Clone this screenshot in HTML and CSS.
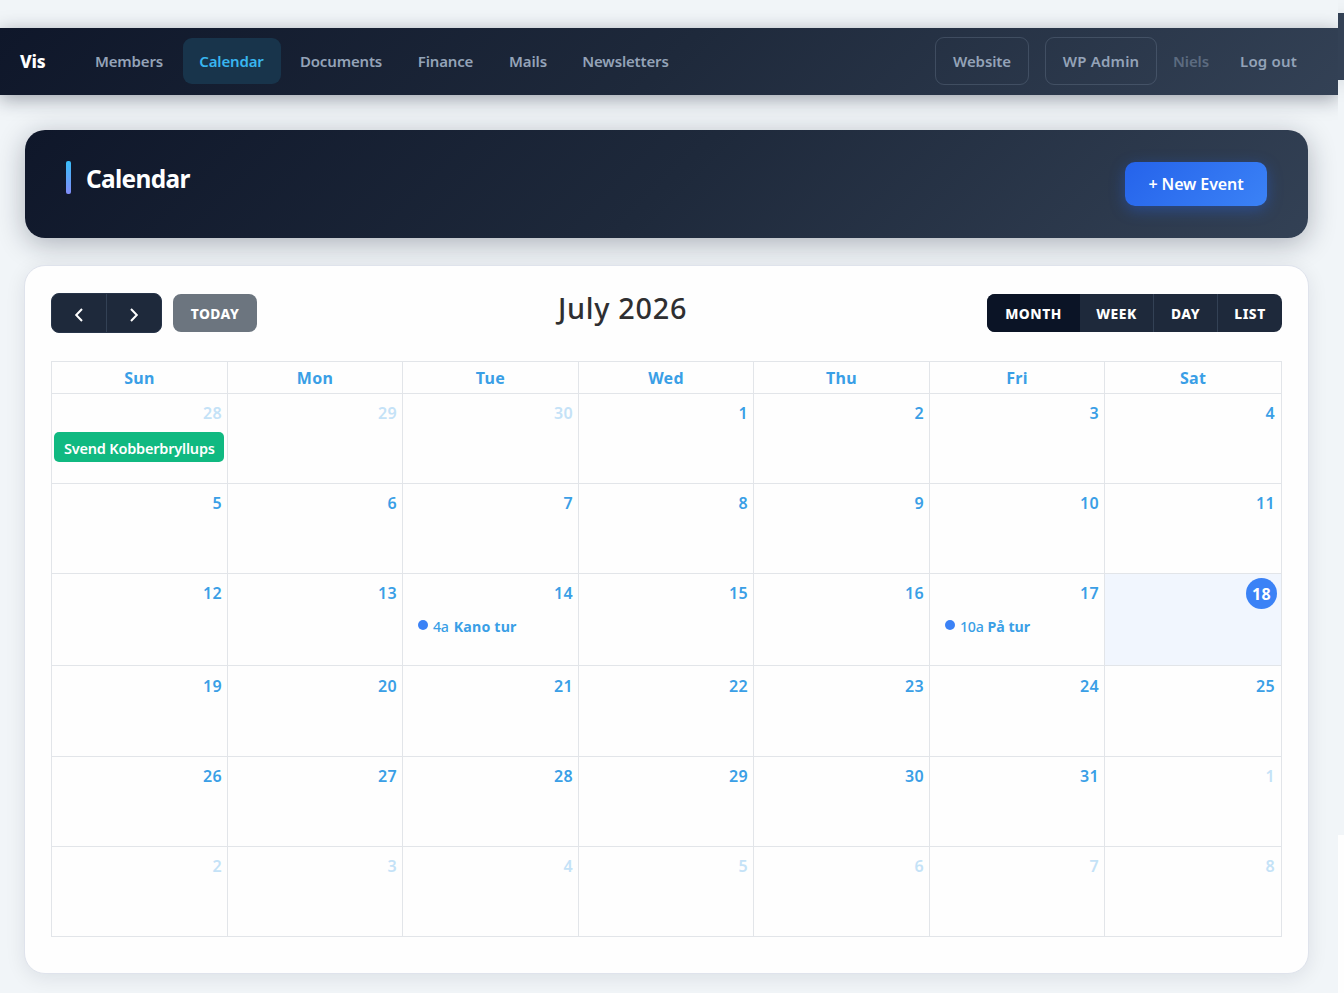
FILE: index.html
```
<!DOCTYPE html>
<html lang="en">
<head>
<meta charset="utf-8">
<title>Calendar</title>
<link rel="stylesheet" href="styles.css">
</head>
<body>
<div class="page">
  <header class="navbar">
    <a class="brand">Vis</a>
    <nav class="nav-links">
      <a class="nav-link">Members</a><a class="nav-link active">Calendar</a><a class="nav-link">Documents</a><a class="nav-link">Finance</a><a class="nav-link">Mails</a><a class="nav-link">Newsletters</a>
    </nav>
    <div class="nav-user">
      <a class="outlined">Website</a><a class="outlined wide">WP Admin</a><span class="user">Niels</span><a class="logout">Log out</a>
    </div>
  </header>
  <section class="hero">
    <div class="hero-title"><span class="accent"></span><h1>Calendar</h1></div>
    <button class="new-event">+ New Event</button>
  </section>
  <main class="card">
    <div class="toolbar">
      <div class="left">
        <div class="arrows">
          <button><svg width="10" height="14" viewBox="0 0 10 14"><path d="M8 1 2.2 7 8 13"/></svg></button>
          <button><svg width="10" height="14" viewBox="0 0 10 14"><path d="M2 1 7.8 7 2 13"/></svg></button>
        </div>
        <button class="today">TODAY</button>
      </div>
      <h2>July 2026</h2>
      <div class="views"><button class="on">MONTH</button><button>WEEK</button><button>DAY</button><button>LIST</button></div>
    </div>
    <div class="month">
      <div class="dow">Sun</div><div class="dow">Mon</div><div class="dow">Tue</div><div class="dow">Wed</div><div class="dow">Thu</div><div class="dow">Fri</div><div class="dow">Sat</div>

      <div class="day other"><span class="num">28</span><div class="event-block"><span>Svend Kobberbryllups</span></div></div>
      <div class="day other"><span class="num">29</span></div>
      <div class="day other"><span class="num">30</span></div>
      <div class="day"><span class="num">1</span></div>
      <div class="day"><span class="num">2</span></div>
      <div class="day"><span class="num">3</span></div>
      <div class="day"><span class="num">4</span></div>

      <div class="day"><span class="num">5</span></div>
      <div class="day"><span class="num">6</span></div>
      <div class="day"><span class="num">7</span></div>
      <div class="day"><span class="num">8</span></div>
      <div class="day"><span class="num">9</span></div>
      <div class="day"><span class="num">10</span></div>
      <div class="day"><span class="num">11</span></div>

      <div class="day"><span class="num">12</span></div>
      <div class="day"><span class="num">13</span></div>
      <div class="day"><span class="num">14</span><div class="event-dot"><i></i><span class="time">4a</span><b class="wide">Kano tur</b></div></div>
      <div class="day"><span class="num">15</span></div>
      <div class="day"><span class="num">16</span></div>
      <div class="day"><span class="num">17</span><div class="event-dot"><i></i><span class="time">10a</span><b>På tur</b></div></div>
      <div class="day current"><span class="num">18</span></div>

      <div class="day low"><span class="num">19</span></div>
      <div class="day low"><span class="num">20</span></div>
      <div class="day low"><span class="num">21</span></div>
      <div class="day low"><span class="num">22</span></div>
      <div class="day low"><span class="num">23</span></div>
      <div class="day low"><span class="num">24</span></div>
      <div class="day low"><span class="num">25</span></div>

      <div class="day"><span class="num">26</span></div>
      <div class="day"><span class="num">27</span></div>
      <div class="day"><span class="num">28</span></div>
      <div class="day"><span class="num">29</span></div>
      <div class="day"><span class="num">30</span></div>
      <div class="day"><span class="num">31</span></div>
      <div class="day other"><span class="num">1</span></div>

      <div class="day other"><span class="num">2</span></div>
      <div class="day other"><span class="num">3</span></div>
      <div class="day other"><span class="num">4</span></div>
      <div class="day other"><span class="num">5</span></div>
      <div class="day other"><span class="num">6</span></div>
      <div class="day other"><span class="num">7</span></div>
      <div class="day other"><span class="num">8</span></div>
    </div>
  </main>
</div>
<aside class="edge"><div class="edge-bar"></div><div class="edge-foot"></div></aside>
</body>
</html>
```

FILE: styles.css
```
* { box-sizing: border-box; }
body {
  margin: 0;
  width: 1344px;
  height: 993px;
  overflow: hidden;
  display: flex;
  background: #f1f5f8;
  font-family: "Noto Sans", "Open Sans", sans-serif;
}
button { font-family: inherit; border: 0; padding: 0; margin: 0; color: #fff; }
h1, h2 { margin: 0; }

.page { width: 1338px; height: 993px; padding-top: 28px; overflow: hidden; }

.navbar {
  height: 67px;
  padding: 0 24px 2px 20px;
  display: flex;
  align-items: center;
  background: linear-gradient(135deg, #0f172a 0%, #1e293b 50%, #334155 100%);
  box-shadow: 0 4px 18px rgba(15, 23, 42, .38);
  font-size: 15px;
  font-weight: 600;
  color: #94a3b8;
}
.brand { width: 59px; font-size: 17.5px; font-weight: 800; letter-spacing: -.2px; color: #fff; }
.nav-links { display: grid; grid-template-columns: 101px 98px 115px 88px 71px 118px; column-gap: 3px; letter-spacing: -.15px; }
.nav-link { height: 46px; line-height: 46px; padding-right: 1px; text-align: center; border-radius: 9px; }
.nav-link.active { background: #18344b; color: #38b6f0; }
.nav-user { margin-left: auto; display: flex; align-items: center; letter-spacing: -.1px; }
.outlined { width: 94px; height: 48px; line-height: 46px; margin-right: 16px; text-align: center; border: 1px solid rgba(148, 163, 184, .23); border-radius: 9px; }
.outlined.wide { width: 112px; letter-spacing: .2px; }
.user { width: 67px; color: #5c6b80; }
.logout { width: 74px; letter-spacing: .2px; }

.hero {
  margin: 35px 30px 0 25px;
  height: 108px;
  padding: 31px 41px 0;
  display: flex;
  justify-content: space-between;
  align-items: flex-start;
  border-radius: 20px;
  background: linear-gradient(135deg, #0f172a 0%, #1e293b 50%, #334155 100%);
  box-shadow: 0 6px 28px rgba(15, 23, 42, .3);
}
.hero-title { display: flex; gap: 15px; }
.accent { width: 5px; height: 33px; border-radius: 2px; background: linear-gradient(#38bdf8, #818cf8); }
.hero h1 { font-size: 24.4px; line-height: 36px; font-weight: 700; letter-spacing: -.65px; color: #fff; }
.new-event {
  margin-top: 1px;
  width: 142px;
  height: 44px;
  border-radius: 10px;
  background: linear-gradient(135deg, #2563eb, #3b82f6);
  box-shadow: 0 4px 15px rgba(37, 99, 235, .4);
  font-size: 16px;
  font-weight: 600;
  letter-spacing: -.1px;
}

.card {
  margin: 27px 29px 0 24px;
  height: 709px;
  padding: 27px 26px 0;
  border: 1px solid #dfe3ec;
  border-radius: 21px;
  background: #fefefe;
  box-shadow: 0 4px 20px rgba(15, 23, 42, .09);
}
.toolbar { height: 41px; display: grid; grid-template-columns: 507px 1fr 295px; }
.left { display: flex; gap: 11px; align-items: center; height: 40px; }
.arrows { display: flex; width: 111px; height: 40px; border-radius: 8px; overflow: hidden; background: #1e293b; border: 1px solid #273449; }
.arrows button { flex: 1; display: flex; align-items: center; justify-content: center; padding-top: 4px; background: none; }
.arrows button + button { border-left: 1px solid #334155; }
.arrows svg { fill: none; stroke: #fff; stroke-width: 2; }
.today { width: 84px; height: 38px; border-radius: 8px; background: #6c757f; font-size: 13.8px; font-weight: 800; letter-spacing: .45px; }
.toolbar h2 { margin-top: -1px; font-size: 28.8px; font-weight: 500; line-height: 32px; letter-spacing: .7px; white-space: nowrap; color: #2f2f31; }
.views { display: flex; margin-top: 1px; height: 38px; border-radius: 8px; overflow: hidden; background: #1e293b; }
.views button { width: 64px; background: none; border-left: 1px solid #334155; font-size: 13.8px; font-weight: 800; letter-spacing: .5px; }
.views button:nth-child(2) { width: 73px; border-left: 0; }
.views .on { width: 93px; border: 0; background: #0b1426; }
.views button:last-child { width: 65px; }

.month {
  margin-top: 27px;
  display: grid;
  grid-template-columns: 176px 175px 176px 175px 176px 175px 177px;
  grid-template-rows: 32px 90px 90px 92px 91px 90px 90px;
  border-left: 1px solid #e2e5e9;
  border-top: 1px solid #e2e5e9;
  color: #3a9fe6;
}
.dow, .day { min-width: 0; border-right: 1px solid #e2e5e9; border-bottom: 1px solid #e2e5e9; }
.dow { font-size: 16px; font-weight: 700; line-height: 32px; letter-spacing: .3px; text-align: center; }
.day { padding: 7px 5px 0 2px; font-size: 16px; font-weight: 600; text-align: right; }
.day:nth-child(7n) { padding-right: 6px; }
.day.low { padding-top: 8px; }
.num { display: block; line-height: 24px; letter-spacing: .3px; }
.day.other .num { color: #c4e2f7; }
.day.current { padding: 4px 4px 0; background: #f1f6fe; }
.current .num { width: 31px; height: 31px; margin-left: auto; line-height: 32px; text-align: center; border-radius: 50%; background: #3b82f6; color: #fff; font-weight: 700; }
.event-block { margin: 7px -2px 0 0; height: 30px; padding: 0 7px 0 10px; border-radius: 5px; background: #10b981; color: #fff; font-size: 14.5px; font-weight: 600; line-height: 33px; text-align: left; }
.event-block span { display: block; white-space: nowrap; letter-spacing: -.2px; height: 30px; }
.event-dot { display: flex; align-items: center; margin: 11px 0 0 13px; height: 21px; font-size: 14.2px; line-height: 21px; white-space: nowrap; }
.event-dot i { width: 10px; height: 10px; margin: -4px 5px 0 0; border-radius: 50%; background: #3b82f6; }
.event-dot .time { margin-right: 4px; font-weight: 500; letter-spacing: -.3px; }
.event-dot b { font-weight: 700; }
.event-dot .wide { margin-left: 1px; letter-spacing: .2px; }

.edge { width: 6px; height: 993px; display: flex; flex-direction: column; justify-content: space-between; padding-top: 13px; overflow: hidden; }
.edge-bar { height: 67px; background: #334155; box-shadow: 0 4px 20px rgba(15, 23, 42, .36); }
.edge-foot { height: 158px; background: #fefefe; }
```
